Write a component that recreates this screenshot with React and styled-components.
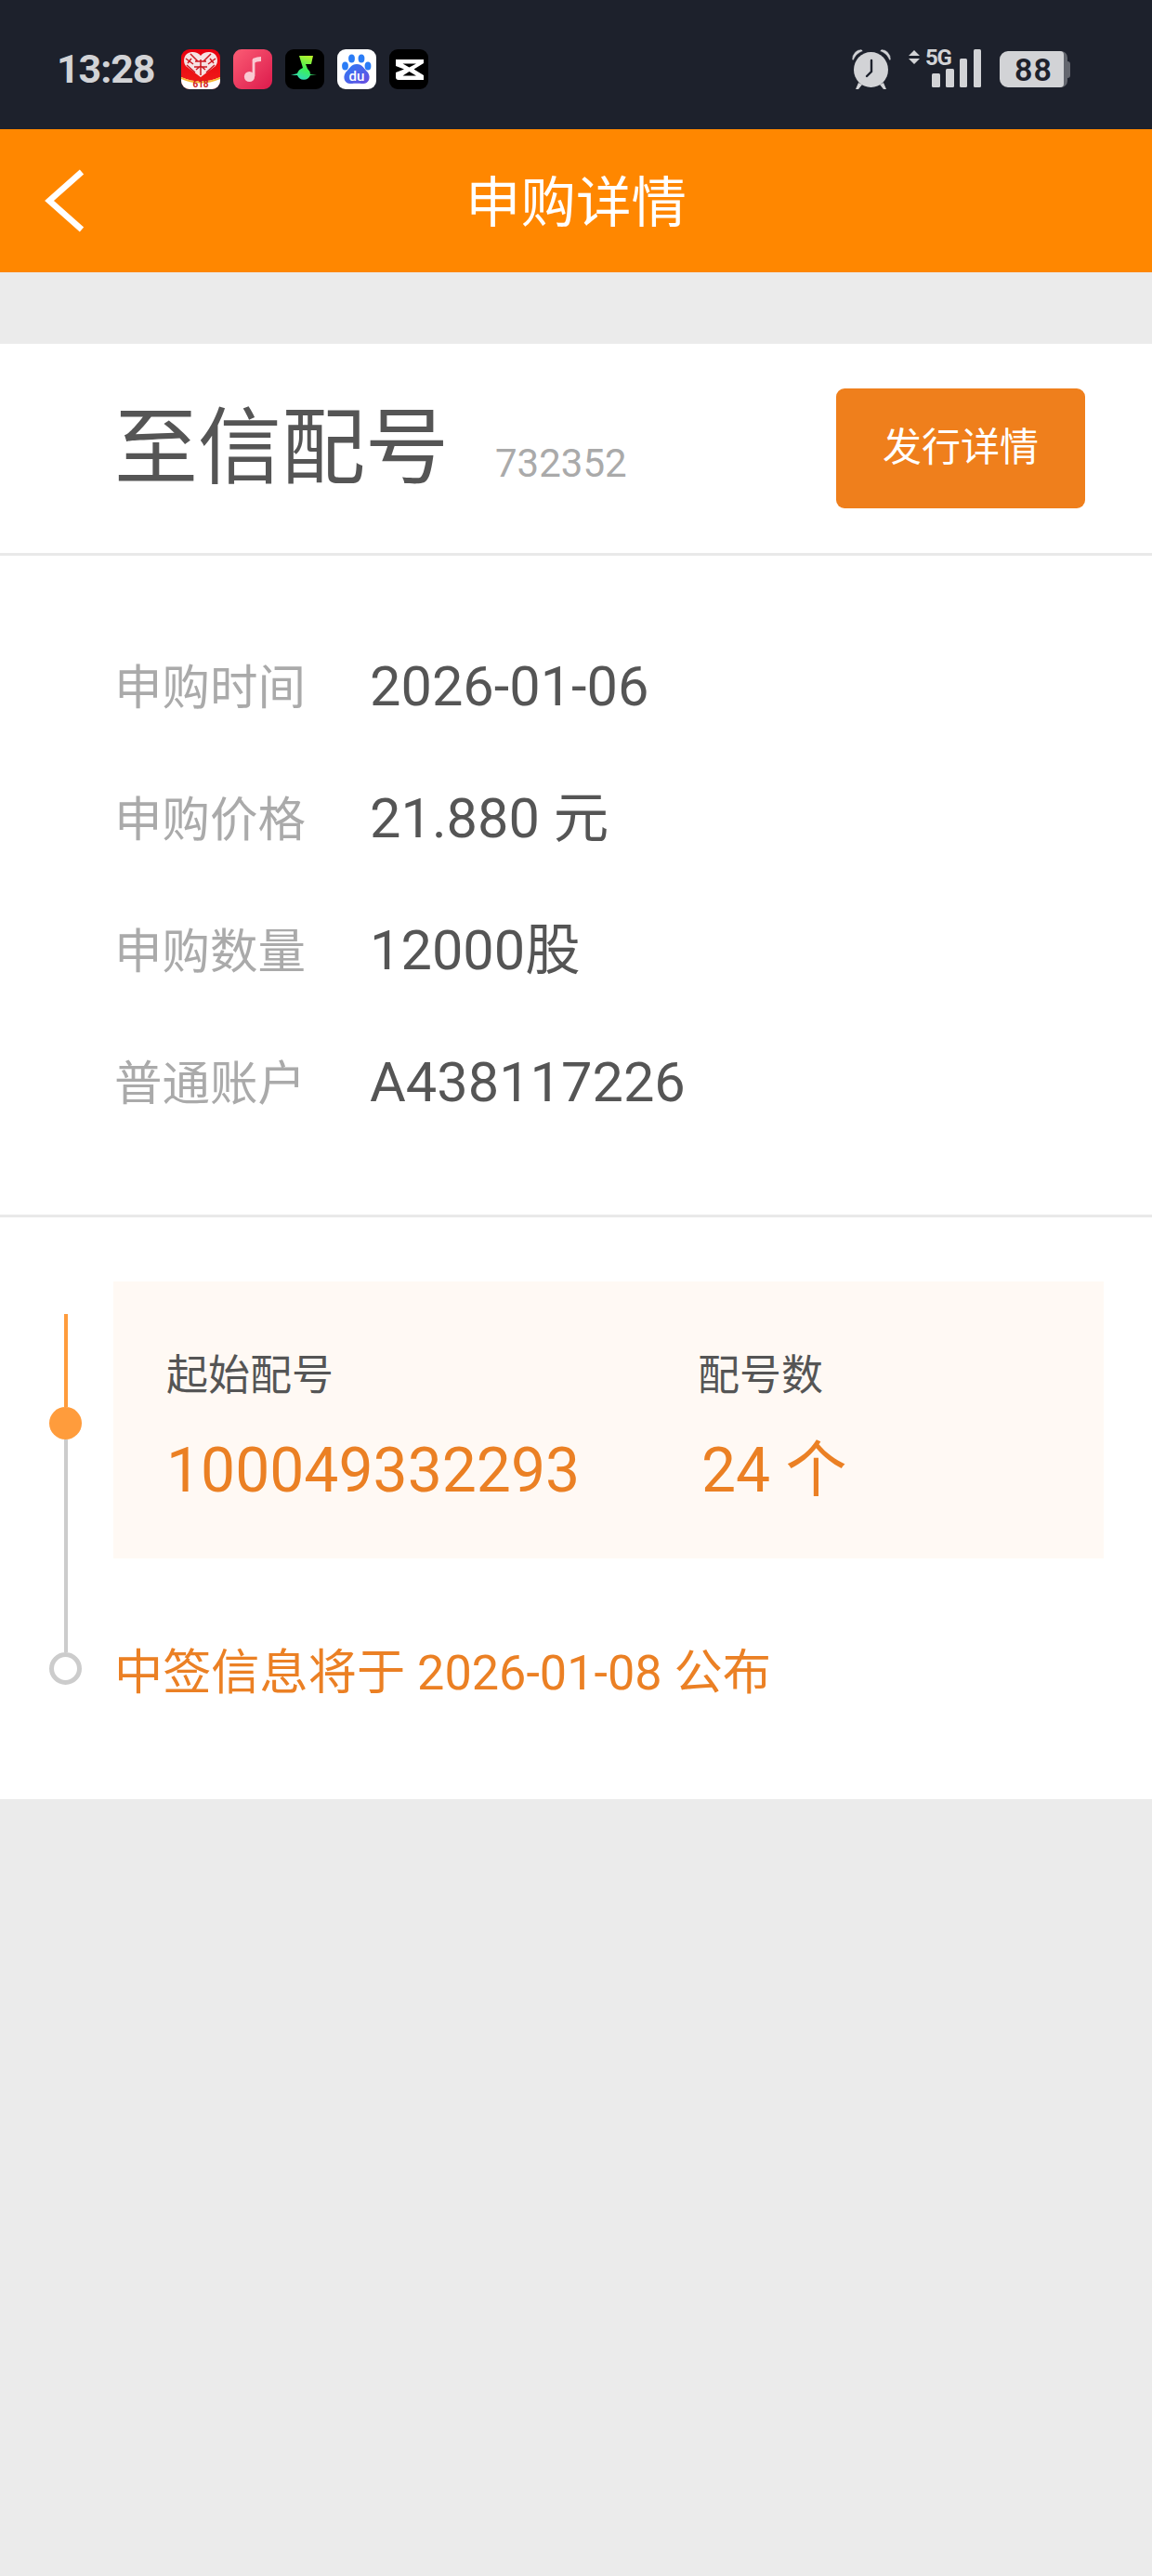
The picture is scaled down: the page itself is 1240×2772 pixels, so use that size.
import React from "react";
import styled, { createGlobalStyle } from "styled-components";

const Global = createGlobalStyle`
  html, body { margin: 0; padding: 0; background: #ebebeb; }
  * { box-sizing: border-box; }
  body { font-family: Roboto, "Noto Sans CJK SC", sans-serif; }
`;

const Page = styled.div`
  width: 1240px;
  min-height: 2772px;
  background: #ebebeb;
  display: flex;
  flex-direction: column;
`;

const StatusBar = styled.div`
  height: 139px;
  background: #1d212c;
  display: flex;
  align-items: flex-start;
  padding: 53px 95px 0 61px;
  color: #d2d3d6;
  isolation: isolate;
`;
const Clock = styled.div`
  font-size: 43px;
  font-weight: 700;
  line-height: 43px;
  width: 134px;
  letter-spacing: -1.1px;
`;
const AppIcons = styled.div`
  display: flex;
  gap: 14px;
`;
const AppIcon = styled.svg`
  width: 42px;
  height: 43px;
  display: block;
`;
const StatusRight = styled.div`
  margin-left: auto;
  display: flex;
  align-items: flex-start;
`;
const AlarmSvg = styled.svg`
  width: 44px;
  height: 44px;
  margin: -1px 18px 0 0;
  display: block;
`;
const NetSvg = styled.svg`
  width: 78px;
  height: 52px;
  margin: -8px 20px 0 0;
  display: block;
`;
const NetLabel = styled.text`
  font-family: Roboto, sans-serif;
  font-weight: 700;
  font-size: 24px;
  fill: #d2d3d6;
  letter-spacing: -1.2px;
`;
const Battery = styled.div`
  width: 69px;
  height: 39px;
  margin-top: 2px;
  padding-left: 4px;
  background: #d2d3d6;
  border-radius: 9px 4px 4px 9px;
  color: #1d212c;
  font-size: 34px;
  font-weight: 600;
  line-height: 40px;
  text-align: center;
  letter-spacing: 1px;
  position: relative;
  &::after {
    content: "";
    position: absolute;
    right: -4px;
    top: 0;
    width: 10px;
    height: 39px;
    background: #63666e;
    border-radius: 0 7px 7px 0;
    z-index: -1;
  }
  &::before {
    content: "";
    position: absolute;
    right: -7px;
    top: 11px;
    width: 4px;
    height: 18px;
    background: #63666e;
    border-radius: 0 3px 3px 0;
    z-index: -1;
  }
`;

const NavBar = styled.div`
  height: 154px;
  background: #ff8700;
  display: flex;
  align-items: center;
  justify-content: center;
  position: relative;
  color: #fff;
`;
const BackIcon = styled.svg`
  position: absolute;
  left: 47px;
  top: 41px;
  width: 48px;
  height: 72px;
`;
const NavTitle = styled.div`
  font-size: 59.5px;
  line-height: 1;
  margin-top: 7px;
`;

const Gap = styled.div`
  height: 77px;
`;

const Sheet = styled.div`
  background: #fff;
`;
const Header = styled.div`
  height: 228px;
  border-bottom: 3px solid #e9e9e9;
  display: flex;
  align-items: center;
  padding: 0 72px 0 123px;
`;
const NameGroup = styled.div`
  display: flex;
  align-items: baseline;
  gap: 50px;
  margin-right: auto;
`;
const StockName = styled.div`
  font-size: 90px;
  line-height: 1.2;
  color: #555;
`;
const StockCode = styled.div`
  font-size: 42px;
  color: #aaa;
`;
const DetailButton = styled.button`
  width: 268px;
  height: 129px;
  border: 0;
  border-radius: 9px;
  background: #ef7f1c;
  color: #fff;
  font-family: inherit;
  font-size: 42px;
  line-height: 60px;
  padding: 0 0 2px;
`;

const InfoList = styled.div`
  padding: 70px 0 71px 123px;
  border-bottom: 3px solid #e9e9e9;
`;
const InfoRow = styled.div`
  height: 142px;
  display: flex;
  align-items: center;
`;
const InfoLabel = styled.div`
  width: 275px;
  font-size: 51.5px;
  line-height: 70px;
  padding-top: 4px;
  color: #aaa;
`;
const InfoValue = styled.div`
  font-size: 59.5px;
  line-height: 70px;
  color: #555;
`;

const Timeline = styled.div`
  display: flex;
  padding: 69px 52px 0 53px;
  height: 626px;
`;
const Gutter = styled.div`
  width: 35px;
  margin-right: 34px;
  padding-top: 35px;
  display: flex;
  flex-direction: column;
  align-items: center;
`;
const Line = styled.div`
  width: 4px;
  height: ${(p) => p.$h}px;
  background: ${(p) => p.$color};
`;
const Dot = styled.div`
  width: 35px;
  height: 35px;
  border-radius: 50%;
  flex: none;
  background: ${(p) => (p.$hollow ? "#fff" : "#ff9c3c")};
  border: ${(p) => (p.$hollow ? "5px solid #ccc" : "0")};
`;
const TimelineBody = styled.div`
  flex: 1;
  min-width: 0;
`;
const Card = styled.div`
  height: 298px;
  background: #fff9f4;
  padding: 72px 0 0 57px;
  display: flex;
`;
const CardCol = styled.div`
  width: ${(p) => p.$w}px;
`;
const CardLabel = styled.div`
  font-size: 45px;
  line-height: 60px;
  color: #555;
`;
const CardValue = styled.div`
  font-size: 66px;
  line-height: 80px;
  margin-top: 32px;
  margin-left: ${(p) => p.$ml || 0}px;
  color: #eb8024;
`;
const Notice = styled.div`
  margin: 89px 0 0 1px;
  font-size: 52.2px;
  line-height: 70px;
  color: #eb8024;
`;

const rows = [
  ["申购时间", "2026-01-06"],
  ["申购价格", "21.880 元"],
  ["申购数量", "12000股"],
  ["普通账户", "A438117226"],
];

const Pdd = () => (
  <AppIcon viewBox="0 0 42 43">
    <defs>
      <clipPath id="r1"><rect width="42" height="43" rx="9" /></clipPath>
      <linearGradient id="g1" x1="0" y1="0" x2="0" y2="1">
        <stop offset="0" stopColor="#e8000f" />
        <stop offset="1" stopColor="#f0201a" />
      </linearGradient>
    </defs>
    <g clipPath="url(#r1)">
      <rect width="42" height="43" fill="url(#g1)" />
      <path d="M0 30 Q21 39 42 30 V43 H0Z" fill="#fff" />
      <path d="M0 30 Q21 39 42 30 V32 Q21 41 0 32Z" fill="#f7b733" />
      <path d="M21 30 L5 18 C1 13 3 4 11 3 C15 2.6 19 4 21 7 C23 4 27 2.6 31 3 C39 4 41 13 37 18 Z" fill="#f6e3e3" />
      <path d="M10 5 L18 13 M32 5 L24 13 M5 10 L13 16 M37 10 L29 16 M6 17 L15 25 M36 17 L27 25 M21 11 V28 M15 13 H27 M14 19 H28 M11 10 L7 15 M31 10 L35 15 M16 22 L21 18 L26 22" stroke="#cc1a22" strokeWidth="1.5" fill="none" />
      <text x="21" y="41" textAnchor="middle" fontSize="10" fontWeight="700" fontFamily="Roboto" fill="#d21a22">618</text>
    </g>
  </AppIcon>
);
const Music = () => (
  <AppIcon viewBox="0 0 42 43">
    <defs>
      <linearGradient id="g2" x1="0" y1="0" x2="1" y2="1">
        <stop offset="0" stopColor="#fb5c74" />
        <stop offset="1" stopColor="#dc1a4c" />
      </linearGradient>
    </defs>
    <rect width="42" height="43" rx="9" fill="url(#g2)" />
    <path d="M22 11 V29" stroke="#f9c9d2" strokeWidth="2.8" />
    <path d="M21 10 Q26 8 30 8 L30 13 Q25 13 22 15 Z" fill="#f9c9d2" />
    <circle cx="17.5" cy="29.5" r="5.6" fill="#f9c9d2" />
  </AppIcon>
);
const Qishui = () => (
  <AppIcon viewBox="0 0 42 43">
    <defs>
      <linearGradient id="g3" x1="0.7" y1="0" x2="0.3" y2="1">
        <stop offset="0" stopColor="#b8f42c" />
        <stop offset="0.55" stopColor="#3cf05a" />
        <stop offset="1" stopColor="#2fd8c0" />
      </linearGradient>
    </defs>
    <rect width="42" height="43" rx="9" fill="#000" />
    <path d="M15 7 H30 L28 16 H22 L24 21 A8 8 0 0 1 27 27 L34 27 L27 28 A7.5 7.5 0 0 1 13 28 L6 28 L13 26 Q14 22 19 20 Z" fill="url(#g3)" />
  </AppIcon>
);
const Baidu = () => (
  <AppIcon viewBox="0 0 42 43">
    <defs>
      <linearGradient id="g4" x1="0" y1="0" x2="1" y2="1">
        <stop offset="0" stopColor="#2a7cf6" />
        <stop offset="1" stopColor="#6a4ce0" />
      </linearGradient>
    </defs>
    <rect width="42" height="43" rx="9" fill="#fff" />
    <ellipse cx="15.5" cy="10" rx="3.4" ry="4.6" fill="#2a7cf6" />
    <ellipse cx="26" cy="10" rx="3.4" ry="4.6" fill="#2a7cf6" />
    <ellipse cx="8.5" cy="18" rx="3.4" ry="4.6" fill="#2a7cf6" />
    <ellipse cx="33" cy="18" rx="3.4" ry="4.6" fill="#2a7cf6" />
    <path d="M21 16 C27 16 29 21 33 25 C37 31 33 38 27 37 C24 36.5 18 36.5 15 37 C9 38 5 31 9 25 C13 21 15 16 21 16Z" fill="url(#g4)" />
    <text x="21" y="34" textAnchor="middle" fontSize="15" fontWeight="500" fontFamily="Roboto" fill="#fff">du</text>
  </AppIcon>
);
const CapCut = () => (
  <AppIcon viewBox="0 0 42 43">
    <rect width="42" height="43" rx="9" fill="#000" />
    <path d="M7 11 H37 V15 L26.5 21.5 L37 28 V33 H10 Q7 33 7 30 V25 L16 21.5 L7 18Z" fill="#fff" />
    <path d="M14.5 15.5 H29 L21.5 19.5Z M14.5 28.5 H29 L21.5 24Z" fill="#000" />
  </AppIcon>
);

export default function App() {
  return (
    <Page>
      <Global />
      <StatusBar>
        <Clock>13:28</Clock>
        <AppIcons>
          <Pdd />
          <Music />
          <Qishui />
          <Baidu />
          <CapCut />
        </AppIcons>
        <StatusRight>
          <AlarmSvg viewBox="0 0 44 44">
            <ellipse cx="21.5" cy="23" rx="18.5" ry="19" fill="#d2d3d6" />
            <path d="M1 12 Q2 2 11 1 L13 3 Q6 5 2.5 13Z M43 12 Q42 2 33 1 L31 3 Q38 5 41.5 13Z" fill="#d2d3d6" stroke="#1d212c" strokeWidth="0.5" />
            <path d="M8 37 L5 44 H8 L12 39Z M35 37 L38 44 H35 L31 39Z" fill="#d2d3d6" />
            <path d="M22 13 V25 L17 30" stroke="#1d212c" strokeWidth="2.4" fill="none" strokeLinecap="round" />
          </AlarmSvg>
          <NetSvg viewBox="0 -8 78 52">
            <path d="M0 7 L6 1 L12 7Z M0 10 H12 L6 16Z" fill="#d2d3d6" />
            <NetLabel x="18" y="17">5G</NetLabel>
            <rect x="25" y="26" width="9" height="15" rx="1.5" fill="#d2d3d6" />
            <rect x="40" y="21" width="9" height="20" rx="1.5" fill="#d2d3d6" />
            <rect x="55" y="10" width="8" height="31" rx="1.5" fill="#d2d3d6" />
            <rect x="70" y="0" width="8" height="41" rx="1.5" fill="#d2d3d6" />
          </NetSvg>
          <Battery>88</Battery>
        </StatusRight>
      </StatusBar>
      <NavBar>
        <BackIcon viewBox="0 0 48 72" fill="none">
          <path d="M41 5 L6 36 L41 67" stroke="#fff" strokeWidth="6.5" />
        </BackIcon>
        <NavTitle>申购详情</NavTitle>
      </NavBar>
      <Gap />
      <Sheet>
        <Header>
          <NameGroup>
            <StockName>至信配号</StockName>
            <StockCode>732352</StockCode>
          </NameGroup>
          <DetailButton>发行详情</DetailButton>
        </Header>
        <InfoList>
          {rows.map(([label, value]) => (
            <InfoRow key={label}>
              <InfoLabel>{label}</InfoLabel>
              <InfoValue>{value}</InfoValue>
            </InfoRow>
          ))}
        </InfoList>
        <Timeline>
          <Gutter>
            <Line $h={100} $color="#ff9c3c" />
            <Dot />
            <Line $h={229} $color="#ccc" />
            <Dot $hollow />
          </Gutter>
          <TimelineBody>
            <Card>
              <CardCol $w={572}>
                <CardLabel>起始配号</CardLabel>
                <CardValue>100049332293</CardValue>
              </CardCol>
              <CardCol $w={400}>
                <CardLabel>配号数</CardLabel>
                <CardValue $ml={4}>24 个</CardValue>
              </CardCol>
            </Card>
            <Notice>中签信息将于 2026-01-08 公布</Notice>
          </TimelineBody>
        </Timeline>
      </Sheet>
    </Page>
  );
}
